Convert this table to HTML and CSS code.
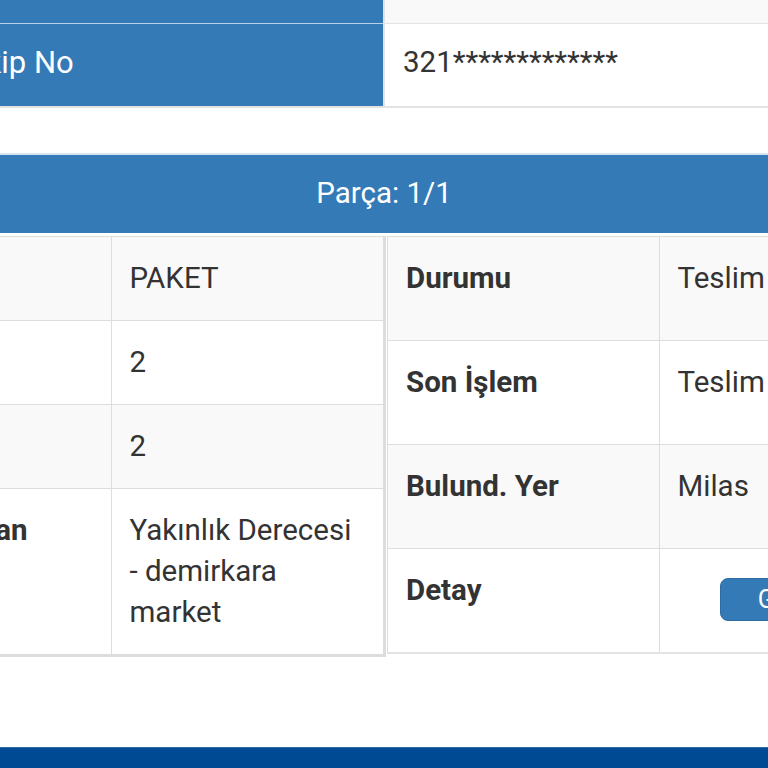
FILE: index.html
```html
<!DOCTYPE html>
<html lang="tr">
<head>
<meta charset="utf-8">
<title>Gönderi Takip</title>
<link rel="stylesheet" href="styles.css">
</head>
<body>
<div class="page">
  <table class="info">
    <tr class="info-row">
      <th class="info-label">Gönderi Durumu</th>
      <td class="info-value info-value--striped">&nbsp;</td>
    </tr>
    <tr class="info-row">
      <th class="info-label">Gönderi Takip No</th>
      <td class="info-value">321*************</td>
    </tr>
  </table>

  <section class="panel">
    <div class="panel-heading">Parça: 1/1</div>
    <div class="panel-body">
      <table class="detail detail--left">
        <tr><th>Tür</th><td>PAKET</td></tr>
        <tr><th>Adet</th><td>2</td></tr>
        <tr><th>Desi/Kg</th><td>2</td></tr>
        <tr><th>Teslim Alan</th><td>Yakınlık Derecesi - demirkara market</td></tr>
      </table>
      <table class="detail detail--right">
        <tr><th>Durumu</th><td>Teslim Edildi</td></tr>
        <tr><th>Son İşlem</th><td>Teslim Edildi</td></tr>
        <tr><th>Bulund. Yer</th><td>Milas</td></tr>
        <tr><th>Detay</th><td class="cell-center"><button class="btn">Göster</button></td></tr>
      </table>
    </div>
  </section>
</div>
<footer class="footer"></footer>
</body>
</html>
```

FILE: styles.css
```css
html, body {
  margin: 0;
  padding: 0;
  background: #ffffff;
}

body {
  width: 768px;
  height: 768px;
  overflow: hidden;
  font-family: Roboto, "Liberation Sans", sans-serif;
  font-size: 29.5px;
  line-height: 41px;
  color: #333333;
  display: flex;
  flex-direction: column;
}

.page {
  width: 1094px;
  margin-left: -163px;
  margin-top: -60px;
  flex: 1;
}

/* Top info table */
.info {
  width: 100%;
  border-collapse: collapse;
  table-layout: fixed;
  border-bottom: 2px solid #e3e3e3;
}

.info th,
.info td {
  box-sizing: border-box;
}

.info-label {
  width: 50%;
  background: #337ab7;
  color: #ffffff;
  font-size: 31px;
  font-weight: 400;
  text-align: left;
  padding: 18px 16px 23px 0;
  border-top: 1px solid #b9d0e6;
  vertical-align: top;
}

.info-value {
  padding: 18px 18px 23px;
  border-top: 1px solid #e3e3e3;
  border-left: 2px solid #e3e3e3;
  vertical-align: top;
}

.info-value--striped {
  background: #f9f9f9;
}

/* Panel */
.panel {
  margin-top: 45px;
  border-top: 2px solid #d7e4f0;
}

.panel-heading {
  background: #337ab7;
  color: #ffffff;
  text-align: center;
  padding: 18px 0 19px;
}

.panel-body {
  display: flex;
  align-items: flex-start;
  gap: 1px;
  padding-top: 3px;
}

.detail {
  border-collapse: collapse;
  table-layout: fixed;
  border: 1px solid #dddddd;
}

.detail--left {
  width: 549px;
  border-right: 3px solid #dddddd;
  border-bottom: 3px solid #dddddd;
}

.detail--right {
  width: 544px;
  border-bottom: 2px solid #e3e3e3;
}

.detail th,
.detail td {
  box-sizing: border-box;
  width: 50%;
  padding: 21px 18px;
  text-align: left;
  vertical-align: top;
  border: 1px solid #dddddd;
}

.detail th {
  font-weight: 700;
}

.detail--left th {
  padding-left: 33px;
}

.detail tr:nth-child(odd) {
  background: #f9f9f9;
}

.detail--right tr {
  height: 104px;
}

.cell-center {
  text-align: center !important;
}

.btn {
  display: inline-block;
  margin-top: 8px;
  height: 43px;
  padding: 0 37px;
  border: 1px solid #2e6da4;
  border-radius: 8px;
  background: #337ab7;
  color: #ffffff;
  font-family: Roboto, "Liberation Sans", sans-serif;
  font-size: 25px;
  line-height: 41px;
}

.footer {
  height: 20px;
  flex: none;
  background: #004a94;
  border-top: 1px solid #2d6aa6;
}
```
